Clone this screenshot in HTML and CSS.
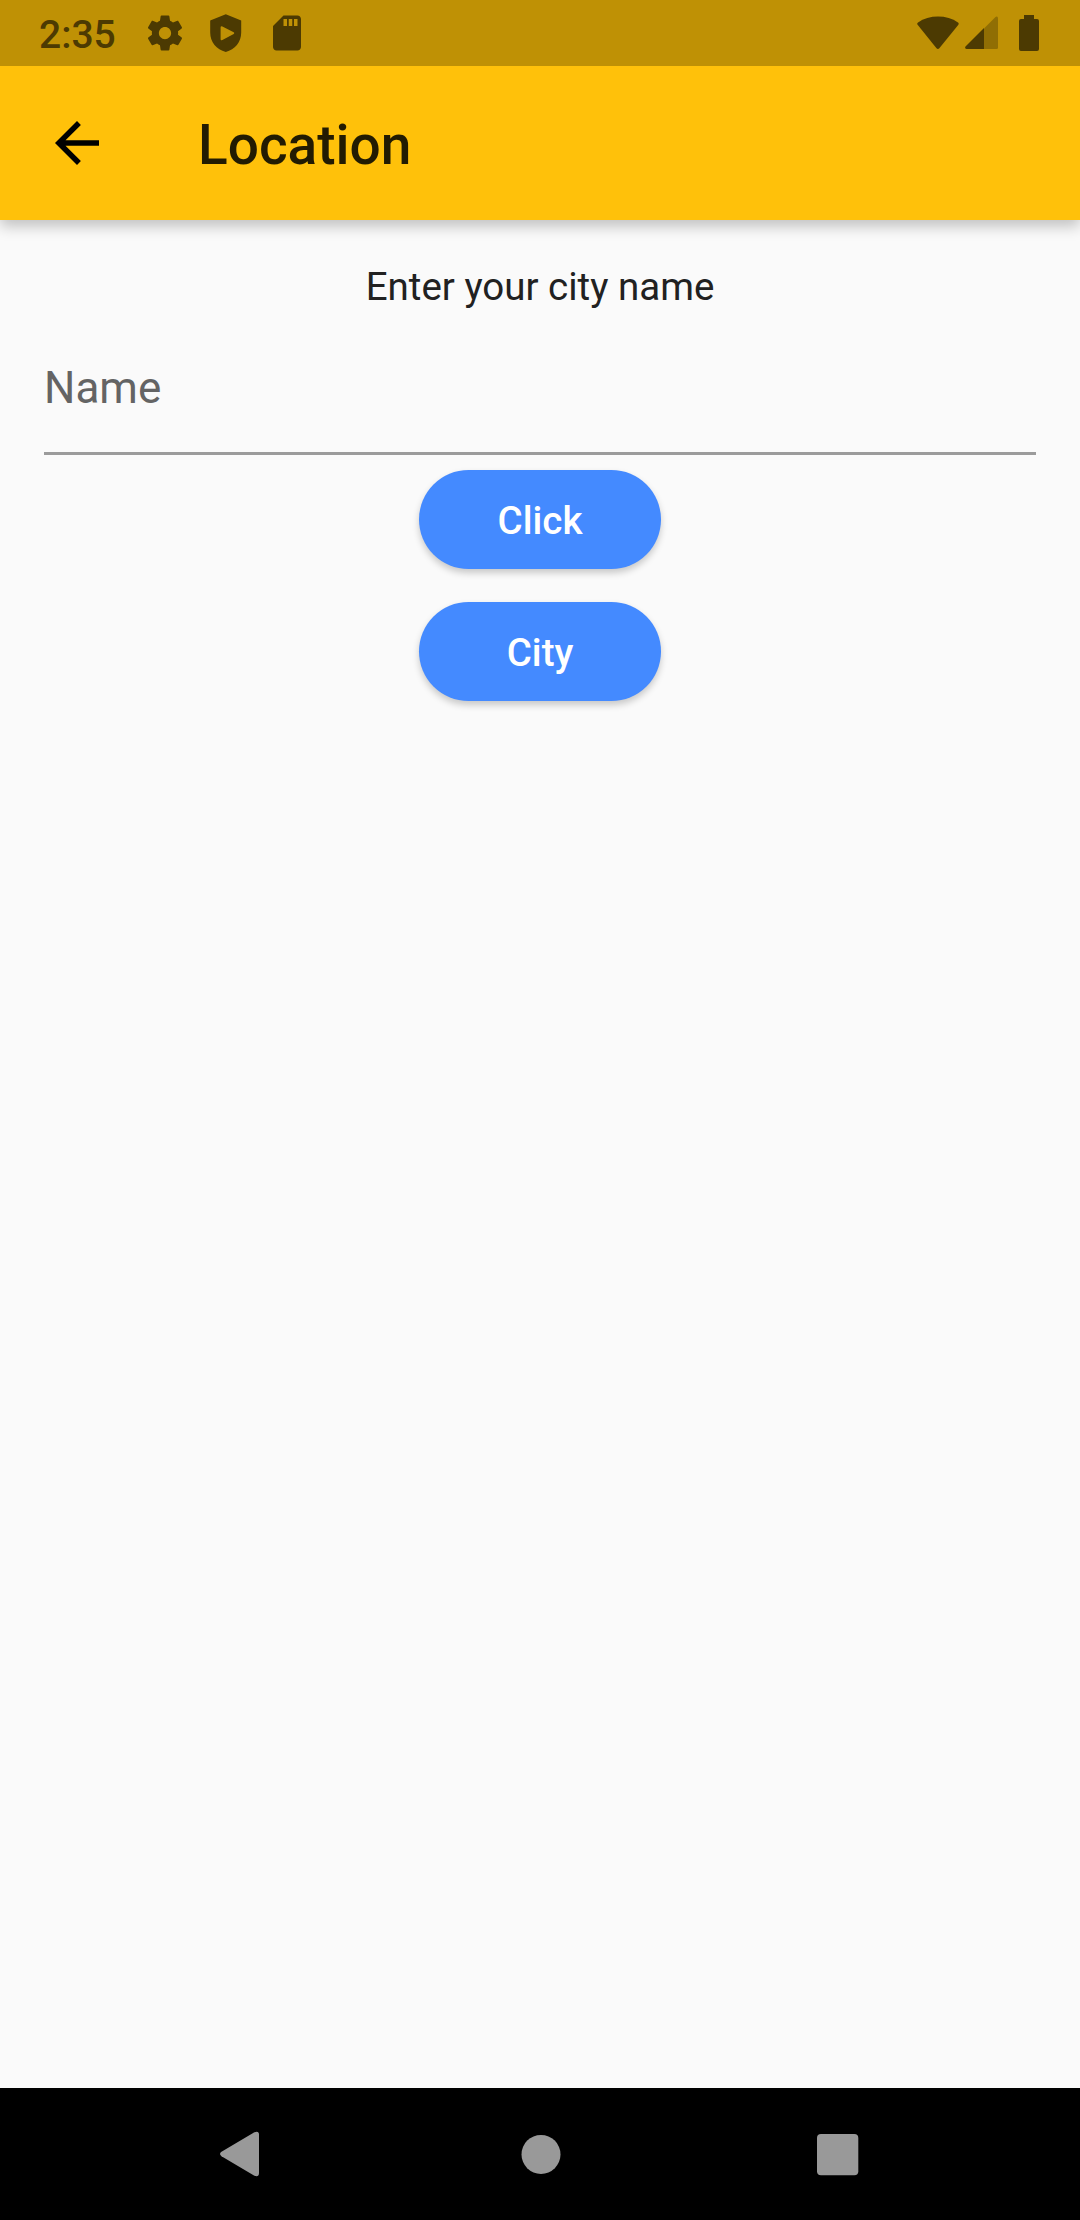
FILE: index.html
```html
<!DOCTYPE html>
<html lang="en">
<head>
<meta charset="utf-8">
<title>Location</title>
<link rel="stylesheet" href="styles.css">
</head>
<body>
<div class="screen">
  <div class="status-bar">
    <span class="time">2:35</span>
    <div class="status-notices">
      <svg width="42" height="42" viewBox="0 0 24 24"><path d="M19.43 12.98c.04-.32.07-.64.07-.98s-.03-.66-.07-.98l2.11-1.65c.19-.15.24-.42.12-.64l-2-3.46c-.12-.22-.39-.3-.61-.22l-2.49 1c-.52-.4-1.08-.73-1.69-.98l-.38-2.65C14.46 2.18 14.25 2 14 2h-4c-.25 0-.46.18-.49.42l-.38 2.65c-.61.25-1.17.59-1.69.98l-2.49-1c-.23-.09-.49 0-.61.22l-2 3.46c-.13.22-.07.49.12.64l2.11 1.65c-.04.32-.07.65-.07.98s.03.66.07.98l-2.11 1.65c-.19.15-.24.42-.12.64l2 3.46c.12.22.39.3.61.22l2.49-1c.52.4 1.08.73 1.69.98l.38 2.65c.03.24.24.42.49.42h4c.25 0 .46-.18.49-.42l.38-2.65c.61-.25 1.17-.59 1.69-.98l2.49 1c.23.09.49 0 .61-.22l2-3.46c.12-.22.07-.49-.12-.64l-2.11-1.65zM12 15.5c-1.93 0-3.5-1.57-3.5-3.5s1.57-3.5 3.5-3.5 3.500 1.570 3.500 3.500-1.570 3.500-3.500 3.500z"/></svg>
      <svg width="42" height="42" viewBox="0 0 42 42"><path fill-rule="evenodd" d="M20.800 2.300L36.200 8.600V20.500C36.200 30 30 37.500 20.800 40C11.500 37.500 5.200 30 5.200 20.500V8.600ZM15.600 19V27Q15.600 29 17.400 28L28.700 22Q30 21.100 28.700 20.300L17.400 14.400Q15.600 13.700 15.600 15.500Z"/></svg>
      <svg width="42" height="42" viewBox="0 0 24 24"><path d="M18 2h-8L4.020 8 4 20c0 1.100.9 2 2 2h12c1.100 0 2-.9 2-2V4c0-1.100-.9-2-2-2zm-6 6h-2V4h2v4zm3 0h-2V4h2v4zm3 0h-2V4h2v4z"/></svg>
    </div>
    <div class="status-system">
      <svg width="42" height="34" viewBox="0 0 42 34"><path d="M.6 8.800Q-.4 7.500 1 6.400C12 -1.400 30 -1.400 41 6.400Q42.300 7.500 41.200 8.900L22.300 32.200Q20.900 33.700 19.500 32.200Z"/></svg>
      <svg width="33" height="34" viewBox="0 0 33 34"><path opacity=".4" d="M19 12.500L30.500 1Q33 -.3 33 2.500V31.500Q33 33 31.500 33H19Z"/><path d="M19 12V33H1.500Q-.7 32.600.5 30.500Z"/></svg>
      <svg class="battery" width="20" height="36" viewBox="0 0 20 36"><path d="M5 0H15V4H18Q20 4 20 6V34Q20 36 18 36H2Q0 36 0 34V6Q0 4 2 4H5Z"/></svg>
    </div>
  </div>

  <header class="app-bar">
    <svg class="back" width="66" height="66" viewBox="0 0 24 24"><path d="M20 11H7.830l5.590-5.590L12 4l-8 8 8 8 1.410-1.410L7.830 13H20v-2z"/></svg>
    <h1 class="title">Location</h1>
  </header>

  <main class="content">
    <p class="prompt">Enter your city name</p>
    <div class="field">Name</div>
    <div class="actions">
      <button class="button">Click</button>
      <button class="button">City</button>
    </div>
  </main>

  <nav class="nav-bar">
    <svg width="48" height="48" viewBox="0 0 48 48"><path d="M5.500 21.800L38 2.500Q42.800 .3 43 4.500V43Q42.800 47.700 38 45.500L5.500 26.200Q2.500 24 5.500 21.800Z"/></svg>
    <svg width="48" height="48" viewBox="0 0 48 48"><circle cx="26" cy="24.400" r="19.500"/></svg>
    <svg width="48" height="48" viewBox="0 0 48 48"><rect x="4" y="4" width="41.300" height="41.300" rx="4"/></svg>
  </nav>
</div>
</body>
</html>
```
FILE: styles.css
```css
* {
  box-sizing: border-box;
}

body {
  margin: 0;
  font-family: Roboto, sans-serif;
  background: #fafafa;
}

.screen {
  display: flex;
  flex-direction: column;
  width: 1080px;
  height: 2220px;
  overflow: hidden;
}

svg {
  display: block;
  flex: none;
}

.status-bar {
  position: relative;
  z-index: 1;
  display: flex;
  align-items: center;
  height: 66px;
  padding: 0 41px 0 39px;
  background: #bf9105;
  color: #4c3a02;
  fill: #4c3a02;
}

.time {
  width: 105px;
  padding-top: 3px;
  font-size: 39px;
  font-weight: 500;
  line-height: 46px;
}

.status-notices {
  display: flex;
  gap: 19px;
}

.status-system {
  display: flex;
  align-items: center;
  margin-left: auto;
}

.status-system svg + svg {
  margin-left: 6px;
}

.status-system .battery {
  margin-left: 21px;
}

.app-bar {
  display: flex;
  align-items: center;
  height: 154px;
  padding: 0 44px;
  gap: 88px;
  background: #ffc10a;
  box-shadow: 0 6px 14px rgba(0, 0, 0, 0.24);
}

.title {
  margin: 0;
  padding-top: 3px;
  font-size: 55px;
  font-weight: 500;
  line-height: 64px;
  color: #221b02;
}

.content {
  flex: 1;
  padding: 44px;
}

.prompt {
  margin: 0;
  font-size: 38.5px;
  line-height: 46px;
  text-align: center;
  color: #212121;
}

.field {
  height: 145px;
  padding-top: 52px;
  border-bottom: 3px solid #9b9b9b;
  font-size: 44px;
  line-height: 52px;
  color: #646464;
}

.actions {
  display: flex;
  flex-direction: column;
  align-items: center;
  gap: 33px;
  padding-top: 15px;
}

.button {
  width: 242px;
  height: 99px;
  padding: 2px 0 0;
  border: 0;
  border-radius: 50px;
  background: #448aff;
  box-shadow: 0 4px 7px rgba(0, 0, 0, 0.2);
  color: #fff;
  font-family: inherit;
  font-size: 38.5px;
  font-weight: 500;
}

.nav-bar {
  display: flex;
  justify-content: space-between;
  align-items: center;
  height: 132px;
  padding: 0 219px 0 216px;
  background: #000;
  fill: #999;
}
```
